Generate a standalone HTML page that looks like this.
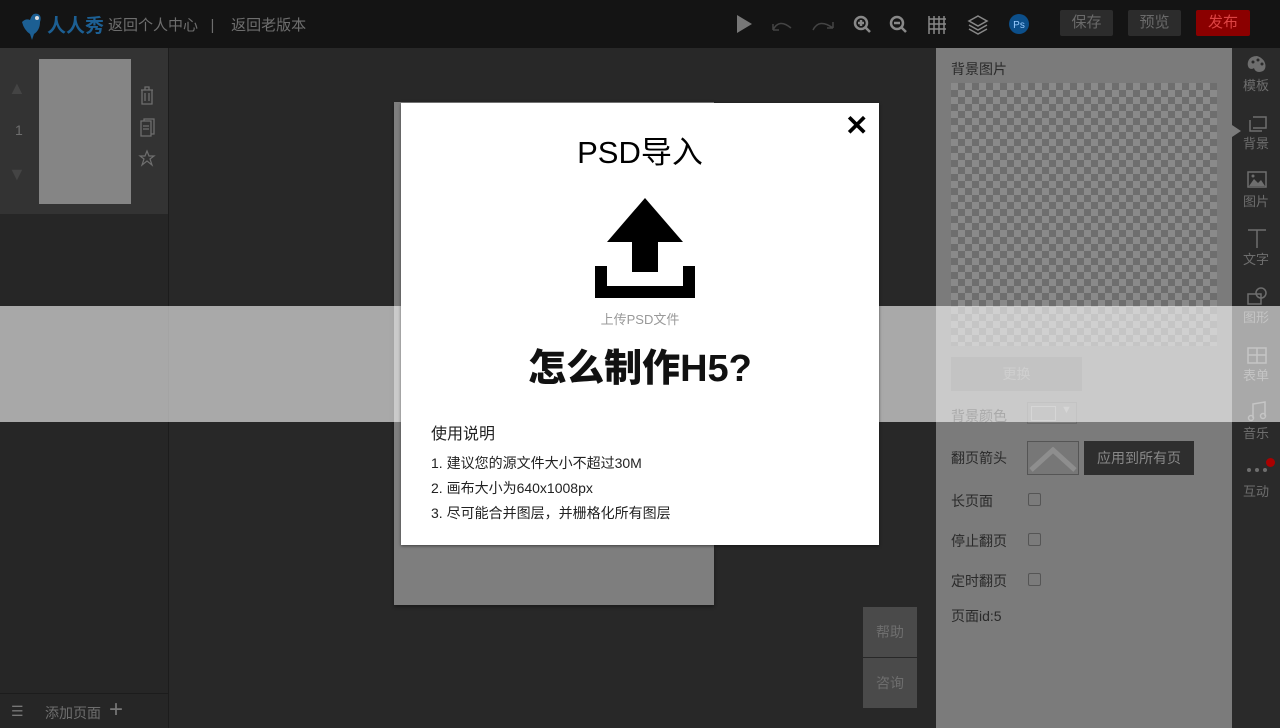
<!DOCTYPE html>
<html><head><meta charset="utf-8">
<style>
*{margin:0;padding:0;box-sizing:border-box}
body{width:1280px;height:728px;overflow:hidden;background:#282828;font-family:"Liberation Sans","Noto Sans CJK SC",sans-serif;position:relative;color:#888}
.a{position:absolute}
.top{left:0;top:0;width:1280px;height:48px;background:#141414}
.btn{top:10px;height:26px;line-height:26px;font-size:15px;text-align:center;border-radius:2px;background:#2c2c2c;color:#6a6a6a}
.rail{left:1232px;top:48px;width:48px;height:680px;background:#2a2a2a}
.ri{left:1232px;width:48px;text-align:center;font-size:13px;color:#6e6e6e}
.lbl{left:951px;font-size:14px;color:#2a2a2a}
.cb{left:1028px;width:13px;height:13px;border:1px solid #555;border-radius:2px}
</style></head><body>
<div class="a top"></div>
<svg class="a" style="left:20px;top:8px" width="28" height="32" viewBox="0 0 28 32"><path d="M2 14 Q6 10 10 12 Q12 4 18 6 Q22 8 20 14 Q20 22 14 26 L12 32 L10 26 Q4 22 2 14Z" fill="#1c5f93"/><circle cx="17" cy="10" r="2" fill="#ddd"/></svg>
<div class="a" style="left:47px;top:11px;font-size:19px;font-weight:bold;color:#1c5f93">人人秀</div>
<div class="a" style="left:108px;top:14px;font-size:15px;color:#6e6e6e">返回个人中心 &nbsp;&nbsp;|&nbsp;&nbsp;&nbsp; 返回老版本</div>
<svg class="a" style="left:735px;top:14px" width="300" height="22" viewBox="0 0 300 22">
<path d="M2 1 L17 10 L2 19Z" fill="#777"/>
<path d="M38 16 Q44 4 56 14 M38 16 V10 M38 16 H44" stroke="#444" stroke-width="1.5" fill="none"/>
<path d="M98 14 Q84 4 78 16 M98 14 V8 M98 14 H92" stroke="#444" stroke-width="1.5" fill="none"/>
<circle cx="126" cy="9" r="6" stroke="#888" stroke-width="2.5" fill="none"/><path d="M130 13 L135 18 M123 9 H129 M126 6 V12" stroke="#888" stroke-width="2.5"/>
<circle cx="162" cy="9" r="6" stroke="#888" stroke-width="2.5" fill="none"/><path d="M166 13 L171 18 M159 9 H165" stroke="#888" stroke-width="2.5"/>
<path d="M194 2 V20 M199 2 V20 M204 2 V20 M209 2 V20 M194 5 H211 M194 10 H211 M194 15 H211" stroke="#888" stroke-width="1.5"/>
<path d="M243 2 L252 7 L243 12 L234 7Z M234 11 L243 16 L252 11 M234 15 L243 20 L252 15" stroke="#888" stroke-width="1.5" fill="none"/>
<circle cx="284" cy="10" r="10" fill="#0c4f8a"/><text x="284" y="14" font-size="10" fill="#9cf" text-anchor="middle" font-family="Liberation Sans">Ps</text>
</svg>
<div class="a btn" style="left:1060px;width:53px">保存</div>
<div class="a btn" style="left:1128px;width:53px">预览</div>
<div class="a btn" style="left:1196px;width:54px;background:#8b0000;color:#d44">发布</div>

<div class="a" style="left:0;top:48px;width:169px;height:680px;background:#262626;border-right:1px solid #1c1c1c"></div>
<div class="a" style="left:0;top:48px;width:168px;height:166px;background:#333"></div>
<div class="a" style="left:39px;top:59px;width:92px;height:145px;background:#858585"></div>
<div class="a" style="left:8px;top:78px;width:20px;height:20px;color:#444;font-size:18px">▲</div>
<div class="a" style="left:15px;top:122px;font-size:14px;color:#6e6e6e">1</div>
<div class="a" style="left:8px;top:164px;color:#444;font-size:18px">▼</div>
<svg class="a" style="left:138px;top:86px" width="18" height="90" viewBox="0 0 18 90"><path d="M3 4 H15 M7 4 V1 H11 V4 M4 4 V18 H14 V4 M7 7 V15 M11 7 V15" stroke="#6e6e6e" fill="none" stroke-width="1.3"/><path d="M3 35 H13 V50 H3Z M6 35 V33 H16 V48 H13 M5 40 H11 M5 43 H11" stroke="#6e6e6e" fill="none" stroke-width="1.3"/><path d="M9 65 L11 70 L16 70 L12 73 L14 79 L9 75 L4 79 L6 73 L2 70 L7 70Z" stroke="#6e6e6e" fill="none" stroke-width="1.2"/></svg>
<div class="a" style="left:0;top:693px;width:169px;height:35px;border-top:1px solid #1c1c1c"></div>
<div class="a" style="left:11px;top:703px;font-size:14px;color:#777">☰</div>
<div class="a" style="left:45px;top:703px;font-size:14px;color:#6e6e6e">添加页面</div>
<div class="a" style="left:109px;top:696px;font-size:24px;color:#777;font-weight:300">+</div>

<div class="a" style="left:394px;top:102px;width:320px;height:503px;background:#7e7e7e;box-shadow:0 2px 3px #1a1a1a"></div>
<div class="a" style="left:863px;top:607px;width:54px;height:50px;background:#4a4a4a;color:#6e6e6e;font-size:14px;text-align:center;line-height:50px">帮助</div>
<div class="a" style="left:863px;top:658px;width:54px;height:50px;background:#4a4a4a;color:#6e6e6e;font-size:14px;text-align:center;line-height:50px">咨询</div>

<div class="a" style="left:936px;top:48px;width:296px;height:680px;background:#7b7b7b"></div>
<div class="a lbl" style="top:59px">背景图片</div>
<div class="a" style="left:951px;top:83px;width:266px;height:263px;background-color:#8a8a8a;background-image:linear-gradient(45deg,#6e6e6e 25%,transparent 25%,transparent 75%,#6e6e6e 75%),linear-gradient(45deg,#6e6e6e 25%,transparent 25%,transparent 75%,#6e6e6e 75%);background-size:14px 14px;background-position:0 0,7px 7px"></div>
<div class="a" style="left:951px;top:357px;width:131px;height:34px;background:#6a6a6a;color:#888;font-size:14px;text-align:center;line-height:34px">更换</div>
<div class="a lbl" style="top:406px">背景颜色</div>
<div class="a" style="left:1027px;top:402px;width:50px;height:22px;border:1px solid #6a6a6a"><div class="a" style="left:3px;top:3px;width:25px;height:15px;border:1px solid #999"></div><div class="a" style="left:33px;top:1px;font-size:11px;color:#999">▼</div></div>
<div class="a lbl" style="top:448px">翻页箭头</div>
<div class="a" style="left:1027px;top:441px;width:52px;height:34px;border:1px solid #555;background:#777"><svg width="50" height="32"><path d="M3 28 L25 8 L47 28" stroke="#8e8e8e" stroke-width="5" fill="none"/></svg></div>
<div class="a" style="left:1084px;top:441px;width:110px;height:34px;background:#2e2e2e;color:#888;font-size:14px;text-align:center;line-height:34px">应用到所有页</div>
<div class="a lbl" style="top:491px">长页面</div><div class="a cb" style="top:493px"></div>
<div class="a lbl" style="top:531px">停止翻页</div><div class="a cb" style="top:533px"></div>
<div class="a lbl" style="top:571px">定时翻页</div><div class="a cb" style="top:573px"></div>
<div class="a lbl" style="top:606px">页面id:5</div>

<div class="a rail"></div>
<div class="a" style="left:1232px;top:125px;width:0;height:0;border-top:6px solid transparent;border-bottom:6px solid transparent;border-left:9px solid #7b7b7b"></div>
<svg class="a" style="left:1245px;top:54px" width="24" height="420" viewBox="0 0 24 420">
<path d="M12 2 C4 2 2 8 3 12 C4 16 8 15 9 14 C10 18 14 19 18 17 C22 15 22 5 12 2Z" fill="#6e6e6e"/><circle cx="8" cy="8" r="1.5" fill="#2a2a2a"/><circle cx="13" cy="6" r="1.5" fill="#2a2a2a"/><circle cx="17" cy="10" r="1.5" fill="#2a2a2a"/>
<path d="M8 63 H21 V74 H8 M5 66 V77 H17" stroke="#6e6e6e" stroke-width="1.5" fill="none"/>
<rect x="3" y="118" width="18" height="15" stroke="#6e6e6e" stroke-width="1.5" fill="none"/><path d="M4 132 L9 125 L13 129 L16 126 L20 132Z" fill="#6e6e6e"/><circle cx="8" cy="122" r="1.5" fill="#6e6e6e"/>
<path d="M3 176 H21 M12 176 V194" stroke="#6e6e6e" stroke-width="1.5"/>
<rect x="3" y="240" width="13" height="10" stroke="#6e6e6e" stroke-width="1.5" fill="none"/><circle cx="16" cy="239" r="5" stroke="#6e6e6e" stroke-width="1.5" fill="none"/>
<rect x="3" y="294" width="18" height="15" stroke="#6e6e6e" stroke-width="1.5" fill="none"/><path d="M3 301 H21 M12 294 V309" stroke="#6e6e6e" stroke-width="1.5"/>
<path d="M8 364 V350 L20 348 V362" stroke="#6e6e6e" stroke-width="1.5" fill="none"/><circle cx="6" cy="364" r="2.5" stroke="#6e6e6e" stroke-width="1.5" fill="none"/><circle cx="18" cy="362" r="2.5" stroke="#6e6e6e" stroke-width="1.5" fill="none"/>
<circle cx="4" cy="416" r="2" fill="#6e6e6e"/><circle cx="12" cy="416" r="2" fill="#6e6e6e"/><circle cx="20" cy="416" r="2" fill="#6e6e6e"/>
</svg>
<div class="a" style="left:1266px;top:458px;width:9px;height:9px;border-radius:50%;background:#a00"></div>
<div class="a ri" style="top:75px">模板</div>
<div class="a ri" style="top:133px">背景</div>
<div class="a ri" style="top:191px">图片</div>
<div class="a ri" style="top:249px">文字</div>
<div class="a ri" style="top:307px">图形</div>
<div class="a ri" style="top:365px">表单</div>
<div class="a ri" style="top:423px">音乐</div>
<div class="a ri" style="top:481px">互动</div>

<div class="a" style="left:0;top:306px;width:1280px;height:116px;background:rgba(255,255,255,0.6)"></div>

<div class="a" style="left:401px;top:103px;width:478px;height:442px;background:#fff;box-shadow:0 1px 3px rgba(0,0,0,.5)">
 <div class="a" style="left:444px;top:6px;font-size:28px;font-weight:bold;color:#000">✕</div>
 <div class="a" style="left:0;top:24px;width:478px;text-align:center;font-size:31px;color:#000">PSD导入</div>
 <svg class="a" style="left:194px;top:95px" width="100" height="100" viewBox="0 0 100 100"><path d="M50 0 L88 44 L63 44 L63 74 L37 74 L37 44 L12 44Z" fill="#000"/><path d="M0 68 H12 V88 H88 V68 H100 V100 H0Z" fill="#000"/></svg>
 <div class="a" style="left:0;top:206px;width:478px;text-align:center;font-size:13px;color:#999">上传PSD文件</div>
 <div class="a" style="left:0;top:234px;width:478px;text-align:center;font-size:38px;font-weight:900;color:#111">怎么制作H5?</div>
 <div class="a" style="left:30px;top:317px;font-size:16px;color:#222">使用说明</div>
 <div class="a" style="left:30px;top:348px;font-size:14px;color:#222;line-height:25px">1. 建议您的源文件大小不超过30M<br>2. 画布大小为640x1008px<br>3. 尽可能合并图层，并栅格化所有图层</div>
</div>
</body></html>
